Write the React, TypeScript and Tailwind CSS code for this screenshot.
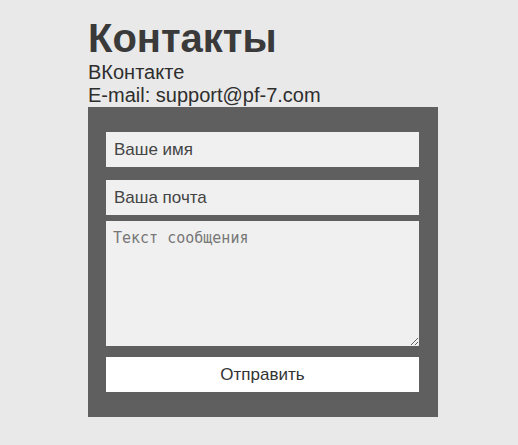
export default function App() {
  return (
    <div className="min-h-[445px] w-full bg-[#e9e9e9] pt-[15px]" style={{ fontFamily: '"Liberation Sans", Arial, sans-serif' }}>
      <div className="ml-[88px] w-[350px]">
        <h1 className="text-[40px] font-bold leading-[46px] text-[#3a3a3a]">Контакты</h1>
        <div className="text-[20px] leading-[23px] text-[#2e2e2e]">ВКонтакте</div>
        <div className="text-[20px] leading-[23px] text-[#2e2e2e]">E-mail: support@pf-7.com</div>
        <form className="bg-[#5f5f5f] px-[18px] py-[25px] flex flex-col" onSubmit={(e) => e.preventDefault()}>
          <input
            type="text"
            placeholder="Ваше имя"
            className="h-[35px] w-[313px] bg-[#f0f0f0] px-[8px] text-[17px] text-[#333] placeholder:text-[#444] outline-none"
          />
          <input
            type="text"
            placeholder="Ваша почта"
            className="mt-[13px] h-[35px] w-[313px] bg-[#f0f0f0] px-[8px] text-[17px] text-[#333] placeholder:text-[#444] outline-none"
          />
          <textarea
            placeholder="Текст сообщения"
            className="mt-[6px] h-[125px] w-[313px] bg-[#f0f0f0] px-[7px] py-[6px] text-[15px] text-[#333] placeholder:text-[#777] outline-none"
            style={{ fontFamily: '"DejaVu Sans Mono", monospace' }}
          />
          <button
            type="submit"
            className="mt-[11px] h-[35px] w-[313px] bg-white text-[17px] text-[#333]"
          >
            Отправить
          </button>
        </form>
      </div>
    </div>
  );
}
